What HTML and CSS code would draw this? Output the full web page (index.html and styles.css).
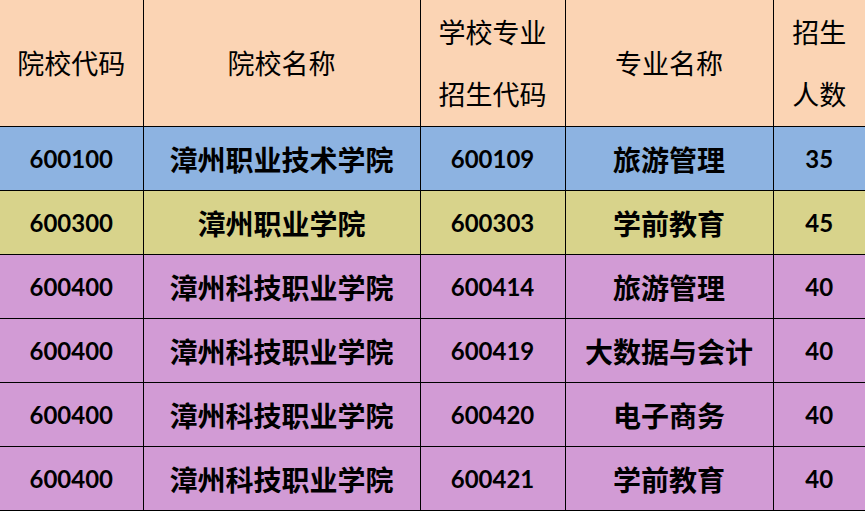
FILE: index.html
```html
<!DOCTYPE html>
<html lang="zh">
<head>
<meta charset="utf-8">
<link rel="stylesheet" href="styles.css">
</head>
<body>
<table class="plan">
  <colgroup>
    <col class="c1"><col class="c2"><col class="c3"><col class="c4"><col class="c5">
  </colgroup>
  <thead>
    <tr class="head">
      <th>院校代码</th>
      <th>院校名称</th>
      <th>学校专业<br>招生代码</th>
      <th>专业名称</th>
      <th>招生<br>人数</th>
    </tr>
  </thead>
  <tbody>
    <tr class="blue">
      <td class="num">600100</td><td class="cn">漳州职业技术学院</td><td class="num">600109</td><td class="cn">旅游管理</td><td class="num">35</td>
    </tr>
    <tr class="olive">
      <td class="num">600300</td><td class="cn">漳州职业学院</td><td class="num">600303</td><td class="cn">学前教育</td><td class="num">45</td>
    </tr>
    <tr class="purple">
      <td class="num">600400</td><td class="cn">漳州科技职业学院</td><td class="num">600414</td><td class="cn">旅游管理</td><td class="num">40</td>
    </tr>
    <tr class="purple">
      <td class="num">600400</td><td class="cn">漳州科技职业学院</td><td class="num">600419</td><td class="cn">大数据与会计</td><td class="num">40</td>
    </tr>
    <tr class="purple">
      <td class="num">600400</td><td class="cn">漳州科技职业学院</td><td class="num">600420</td><td class="cn">电子商务</td><td class="num">40</td>
    </tr>
    <tr class="purple">
      <td class="num">600400</td><td class="cn">漳州科技职业学院</td><td class="num">600421</td><td class="cn">学前教育</td><td class="num">40</td>
    </tr>
  </tbody>
</table>
</body>
</html>
```

FILE: styles.css
```css
html, body {
  margin: 0;
  padding: 0;
  background: #ffffff;
}

.plan {
  width: 865px;
  border-collapse: collapse;
  table-layout: fixed;
  color: #000;
}

.c1 { width: 143px; }
.c2 { width: 277px; }
.c3 { width: 145px; }
.c4 { width: 208px; }
.c5 { width: 92px; }

.plan th,
.plan td {
  border: 1.5px solid #000;
  padding: 0;
  text-align: center;
  vertical-align: middle;
}

.plan tr > :first-child { border-left: none; }
.plan tr > :last-child { border-right: none; }
.plan thead th { border-top: none; }

.head th {
  height: 126px;
  background: #fbd4b4;
  font-family: "Noto Sans CJK SC", sans-serif;
  font-weight: 400;
  font-size: 27px;
  line-height: 62px;
}

.plan td { height: 63px; }

.blue td { background: #8db3e1; }
.olive td { background: #d8d38b; }
.purple td { background: #d29bd5; }

.num {
  font-family: Lato, "Liberation Sans", sans-serif;
  font-weight: 700;
  font-size: 24px;
}

.cn {
  font-family: "Noto Sans CJK SC", sans-serif;
  font-weight: 700;
  font-size: 28px;
}
```
